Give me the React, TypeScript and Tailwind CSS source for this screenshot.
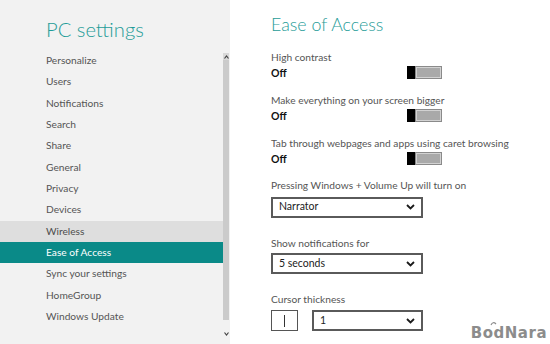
import React from "react";

const navItems = [
  "Personalize",
  "Users",
  "Notifications",
  "Search",
  "Share",
  "General",
  "Privacy",
  "Devices",
  "Wireless",
  "Ease of Access",
  "Sync your settings",
  "HomeGroup",
  "Windows Update",
];

function Chevron() {
  return (
    <svg width="9" height="6" viewBox="0 0 9 6" className="shrink-0">
      <polyline points="1,1 4.5,4.5 8,1" fill="none" stroke="#1a1a1a" strokeWidth="1.8" />
    </svg>
  );
}

function Toggle() {
  return (
    <div className="flex h-[13px] w-[35px]">
      <div className="h-full w-[8px] bg-black" />
      <div className="h-full flex-1 border border-[#8a8a8a] bg-[#a9a9a9] p-0">
        <div className="h-full w-full border border-[#d2d2d2]" />
      </div>
    </div>
  );
}

function ToggleSetting({ label, mt }: { label: string; mt: string }) {
  return (
    <div className={mt}>
      <div className="h-[16px] text-[10.2px] leading-[16px] text-[#555]">{label}</div>
      <div className="flex h-[16px] w-[171px] items-center justify-between">
        <span className="text-[10.5px] font-bold leading-[16px] text-[#111]">Off</span>
        <Toggle />
      </div>
    </div>
  );
}

function Select({ value, w }: { value: string; w: string }) {
  return (
    <div
      className={`flex h-[21px] ${w} items-center justify-between border-2 border-[#5a5a5a] bg-white pl-[6px] pr-[6px]`}
    >
      <span className="text-[10.5px] text-[#222]">{value}</span>
      <Chevron />
    </div>
  );
}

export default function App() {
  return (
    <div
      className="relative flex h-[344px] w-[550px] overflow-hidden bg-white"
      style={{ fontFamily: 'Lato, "Open Sans", sans-serif' }}
    >
      {/* Left panel */}
      <aside className="flex h-full w-[230px] bg-[#f2f2f2]">
        <div className="flex w-[223px] flex-col">
          <div className="h-[28px] mt-[15px] pl-[46px] text-[20.2px] font-light leading-[28px] text-[#1f9c98]">
            PC settings
          </div>
          <div className="mt-[7px] flex flex-col">
            {navItems.map((item) => {
              const active = item === "Ease of Access";
              const hover = item === "Wireless";
              return (
                <div
                  key={item}
                  className={`flex h-[21.33px] items-center pl-[46px] text-[10.2px] ${
                    active
                      ? "bg-[#0a8a88] text-white"
                      : hover
                      ? "bg-[#dedede] text-[#4d4d4d]"
                      : "text-[#555]"
                  }`}
                >
                  {item}
                </div>
              );
            })}
          </div>
        </div>
        {/* scrollbar */}
        <div className="flex w-[6px] flex-col items-center">
          <div className="mt-[53px] flex h-[7px] w-full items-center justify-center bg-[#d8d8d8]">
            <svg width="5" height="4" viewBox="0 0 5 4">
              <polyline points="0.5,3.5 2.5,1 4.5,3.5" fill="none" stroke="#444" strokeWidth="1.2" />
            </svg>
          </div>
          <div className="h-[260px] w-full bg-[#cbcbcb]" />
          <div className="mt-[10px] flex h-[7px] w-full items-center justify-center">
            <svg width="5" height="4" viewBox="0 0 5 4">
              <polyline points="0.5,0.5 2.5,3 4.5,0.5" fill="none" stroke="#444" strokeWidth="1.2" />
            </svg>
          </div>
        </div>
      </aside>

      {/* Right panel */}
      <main className="flex flex-1 flex-col pl-[41px]">
        <div className="mt-[12px] h-[24px] text-[17.8px] font-light leading-[24px] text-[#1f9c98]">
          Ease of Access
        </div>
        <ToggleSetting label="High contrast" mt="mt-[12.7px]" />
        <ToggleSetting label="Make everything on your screen bigger" mt="mt-[11px]" />
        <ToggleSetting label="Tab through webpages and apps using caret browsing" mt="mt-[11px]" />

        <div className="mt-[10px]">
          <div className="h-[16px] text-[10.2px] leading-[16px] text-[#555]">
            Pressing Windows + Volume Up will turn on
          </div>
          <div className="mt-[4px]">
            <Select value="Narrator" w="w-[152px]" />
          </div>
        </div>

        <div className="mt-[17px]">
          <div className="h-[16px] text-[10.2px] leading-[16px] text-[#555]">Show notifications for</div>
          <div className="mt-[2.5px]">
            <Select value="5 seconds" w="w-[152px]" />
          </div>
        </div>

        <div className="mt-[17px]">
          <div className="h-[16px] text-[10.2px] leading-[16px] text-[#555]">Cursor thickness</div>
          <div className="mt-[3px] flex gap-[14px]">
            <div className="flex h-[21px] w-[27px] items-center justify-center border border-[#555] bg-white">
              <div className="h-[12px] w-[1px] bg-[#333]" />
            </div>
            <Select value="1" w="w-[111px]" />
          </div>
        </div>
      </main>

      {/* watermark */}
      <div className="absolute right-[3px] bottom-[4px] flex flex-col items-start">
        <div
          className="text-[15px] font-black leading-[14px] tracking-[0.5px] text-[#8c8c8c]"
          style={{ fontFamily: '"DejaVu Sans", sans-serif' }}
        >
          BodNara
        </div>
        <svg className="absolute left-[19px] top-[-5px]" width="7" height="5" viewBox="0 0 7 5">
          <path d="M1 4 Q3 0 6 3" fill="none" stroke="#8c8c8c" strokeWidth="1.2" />
        </svg>
      </div>
    </div>
  );
}
